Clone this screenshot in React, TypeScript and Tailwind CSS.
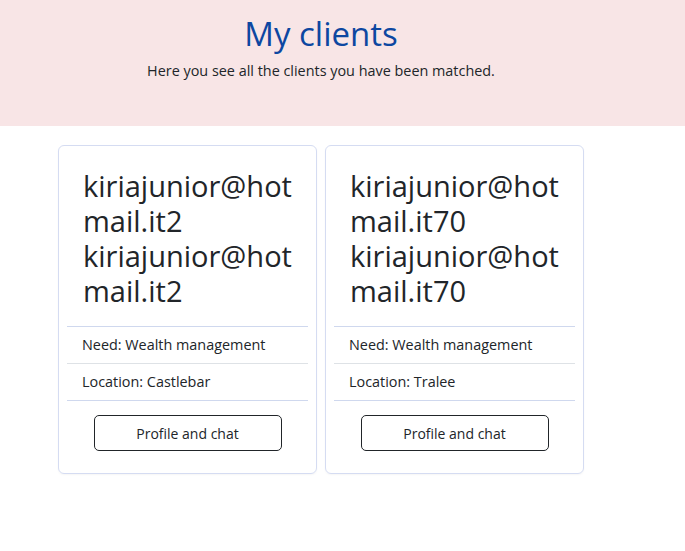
export default function App() {
  const clients = [
    { email: "kiriajunior@hotmail.it2", need: "Wealth management", location: "Castlebar" },
    { email: "kiriajunior@hotmail.it70", need: "Wealth management", location: "Tralee" },
  ]

  return (
    <div className="min-h-screen bg-white text-[#212529]" style={{ fontFamily: '"Open Sans", "Noto Sans", sans-serif' }}>
      {/* Header band */}
      <header className="h-[126px] bg-[#f8e5e6]">
        <div className="w-[642px] pt-[12px] text-center">
          <h1 className="text-[33px] leading-[44px] text-[#0d47a1]">My clients</h1>
          <p className="mt-[5px] text-[14.4px] leading-[20px]">Here you see all the clients you have been matched.</p>
        </div>
      </header>

      {/* Client cards */}
      <main className="flex gap-[8px] pl-[58px] pt-[19px]">
        {clients.map((c) => (
          <div key={c.email} className="w-[259px] rounded-[6px] border border-[#d5dcf2] p-[8px] shadow-[0_1px_2px_rgba(0,0,0,0.04)]">
            <div className="px-[16px] pt-[14px] pb-[18px] text-[29px] leading-[35px] break-all">
              <div>{c.email}</div>
              <div>{c.email}</div>
            </div>
            <div className="border-t border-[#cfd8ee] px-[15px] text-[14.4px] leading-[36px]">Need: {c.need}</div>
            <div className="border-t border-[#dee2e6] px-[15px] text-[14.4px] leading-[36px]">Location: {c.location}</div>
            <div className="flex justify-center border-t border-[#cfd8ee] pt-[14px] pb-[14px]">
              <button className="h-[36px] w-[188px] rounded-[5px] border border-[#212529] bg-white text-[14px]">
                Profile and chat
              </button>
            </div>
          </div>
        ))}
      </main>
    </div>
  )
}
